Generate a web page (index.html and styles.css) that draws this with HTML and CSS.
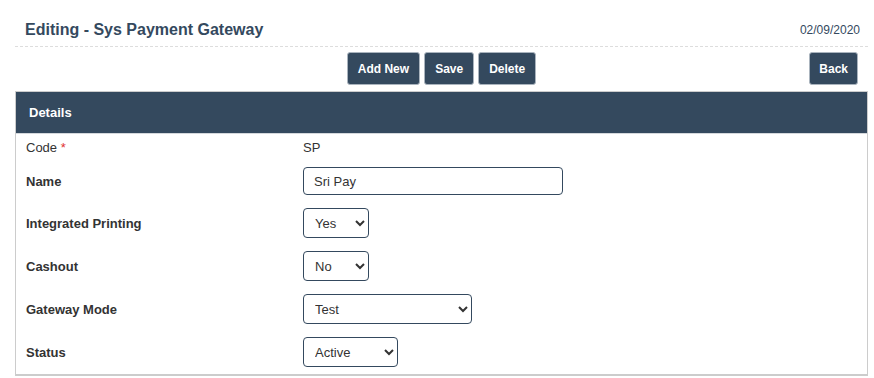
FILE: index.html
```html
<!DOCTYPE html>
<html lang="en">
<head>
    <meta charset="UTF-8">
    <meta name="viewport" content="width=device-width, initial-scale=1.0">
    <title>Editing - Sys Payment Gateway</title>
    <link rel="stylesheet" href="styles.css">
</head>
<body>
  <div class="page">
    <div class="page-header">
      <h1>Editing - Sys Payment Gateway</h1>
      <span class="page-date">02/09/2020</span>
    </div>

    <div class="toolbar">
      <div class="toolbar-center">
        <button class="btn">Add New</button>
        <button class="btn">Save</button>
        <button class="btn">Delete</button>
      </div>
      <div class="toolbar-right">
        <button class="btn">Back</button>
      </div>
    </div>

    <div class="panel">
      <div class="panel-heading">Details</div>
      <div class="panel-body">
        <div class="form-row row-code">
          <label class="plain">Code <span class="req">*</span></label>
          <span class="value">SP</span>
        </div>
        <div class="form-row">
          <label>Name</label>
          <input type="text" class="input name-input" value="Sri Pay" />
        </div>
        <div class="form-row">
          <label>Integrated Printing</label>
          <select class="input select-sm">
            <option>Yes</option>
            <option>No</option>
          </select>
        </div>
        <div class="form-row">
          <label>Cashout</label>
          <select class="input select-sm">
            <option>No</option>
            <option>Yes</option>
          </select>
        </div>
        <div class="form-row">
          <label>Gateway Mode</label>
          <select class="input select-lg">
            <option>Test</option>
            <option>Live</option>
          </select>
        </div>
        <div class="form-row">
          <label>Status</label>
          <select class="input select-md">
            <option>Active</option>
            <option>Inactive</option>
          </select>
        </div>
      </div>
    </div>
  </div>
</body>
</html>
```

FILE: styles.css
```css
html, body {
    margin: 0;
    padding: 0;
    background-color: #ffffff;
    font-family: 'Liberation Sans', Arial, sans-serif;
    color: #333333;
}

.page {
    padding: 0 6px 0 15px;
}

/* Page header */
.page-header {
    display: flex;
    justify-content: space-between;
    align-items: center;
    height: 47px;
    padding: 14px 8px 0 10px;
    border-bottom: 1px dashed #dddddd;
    box-sizing: border-box;
}

.page-header h1 {
    margin: 0;
    font-size: 16px;
    font-weight: bold;
    color: #34495e;
}

.page-date {
    font-size: 12px;
    color: #34495e;
}

/* Toolbar */
.toolbar {
    display: grid;
    grid-template-columns: 1fr auto 1fr;
    align-items: center;
    padding: 5px 10px 6px 10px;
}

.toolbar-center {
    grid-column: 2;
    display: flex;
    gap: 4px;
}

.toolbar-right {
    grid-column: 3;
    display: flex;
    justify-content: flex-end;
}

.btn {
    height: 33px;
    padding: 0 10px;
    background-color: #34495e;
    color: #ffffff;
    border: 1px solid #aab4be;
    border-radius: 3px;
    font-family: 'Liberation Sans', Arial, sans-serif;
    font-size: 12px;
    font-weight: bold;
    cursor: pointer;
}

.toolbar-right .btn {
    padding: 0 9px;
}

/* Details panel */
.panel {
    border: 1px solid #cccccc;
    border-bottom-width: 2px;
}

.panel-heading {
    height: 41px;
    line-height: 41px;
    padding: 0 13px;
    background-color: #34495e;
    color: #ffffff;
    font-size: 13px;
    font-weight: bold;
    border-bottom: 1px solid #d4d8dc;
}

.panel-body {
    padding: 3px 10px 7px 10px;
}

.form-row {
    display: grid;
    grid-template-columns: 277px 1fr;
    align-items: center;
    margin-top: 13px;
    font-size: 13px;
}

.form-row.row-code {
    margin-top: 0;
    height: 20px;
}

.row-code + .form-row {
    margin-top: 10px;
}

.form-row label {
    font-weight: bold;
    color: #333333;
}

.form-row label.plain {
    font-weight: normal;
}

.req {
    color: #e03131;
}

.value {
    color: #333333;
}

.input {
    box-sizing: border-box;
    border: 1px solid #34495e;
    border-radius: 4px;
    background-color: #ffffff;
    color: #333333;
    font-family: 'Liberation Sans', Arial, sans-serif;
    font-size: 13px;
    padding: 0 6px 0 10px;
    justify-self: start;
}

.name-input {
    width: 260px;
    height: 28px;
}

select.input {
    height: 30px;
    padding-left: 7px;
}

.select-sm {
    width: 66px;
}

.select-md {
    width: 95px;
}

.select-lg {
    width: 169px;
}
```
